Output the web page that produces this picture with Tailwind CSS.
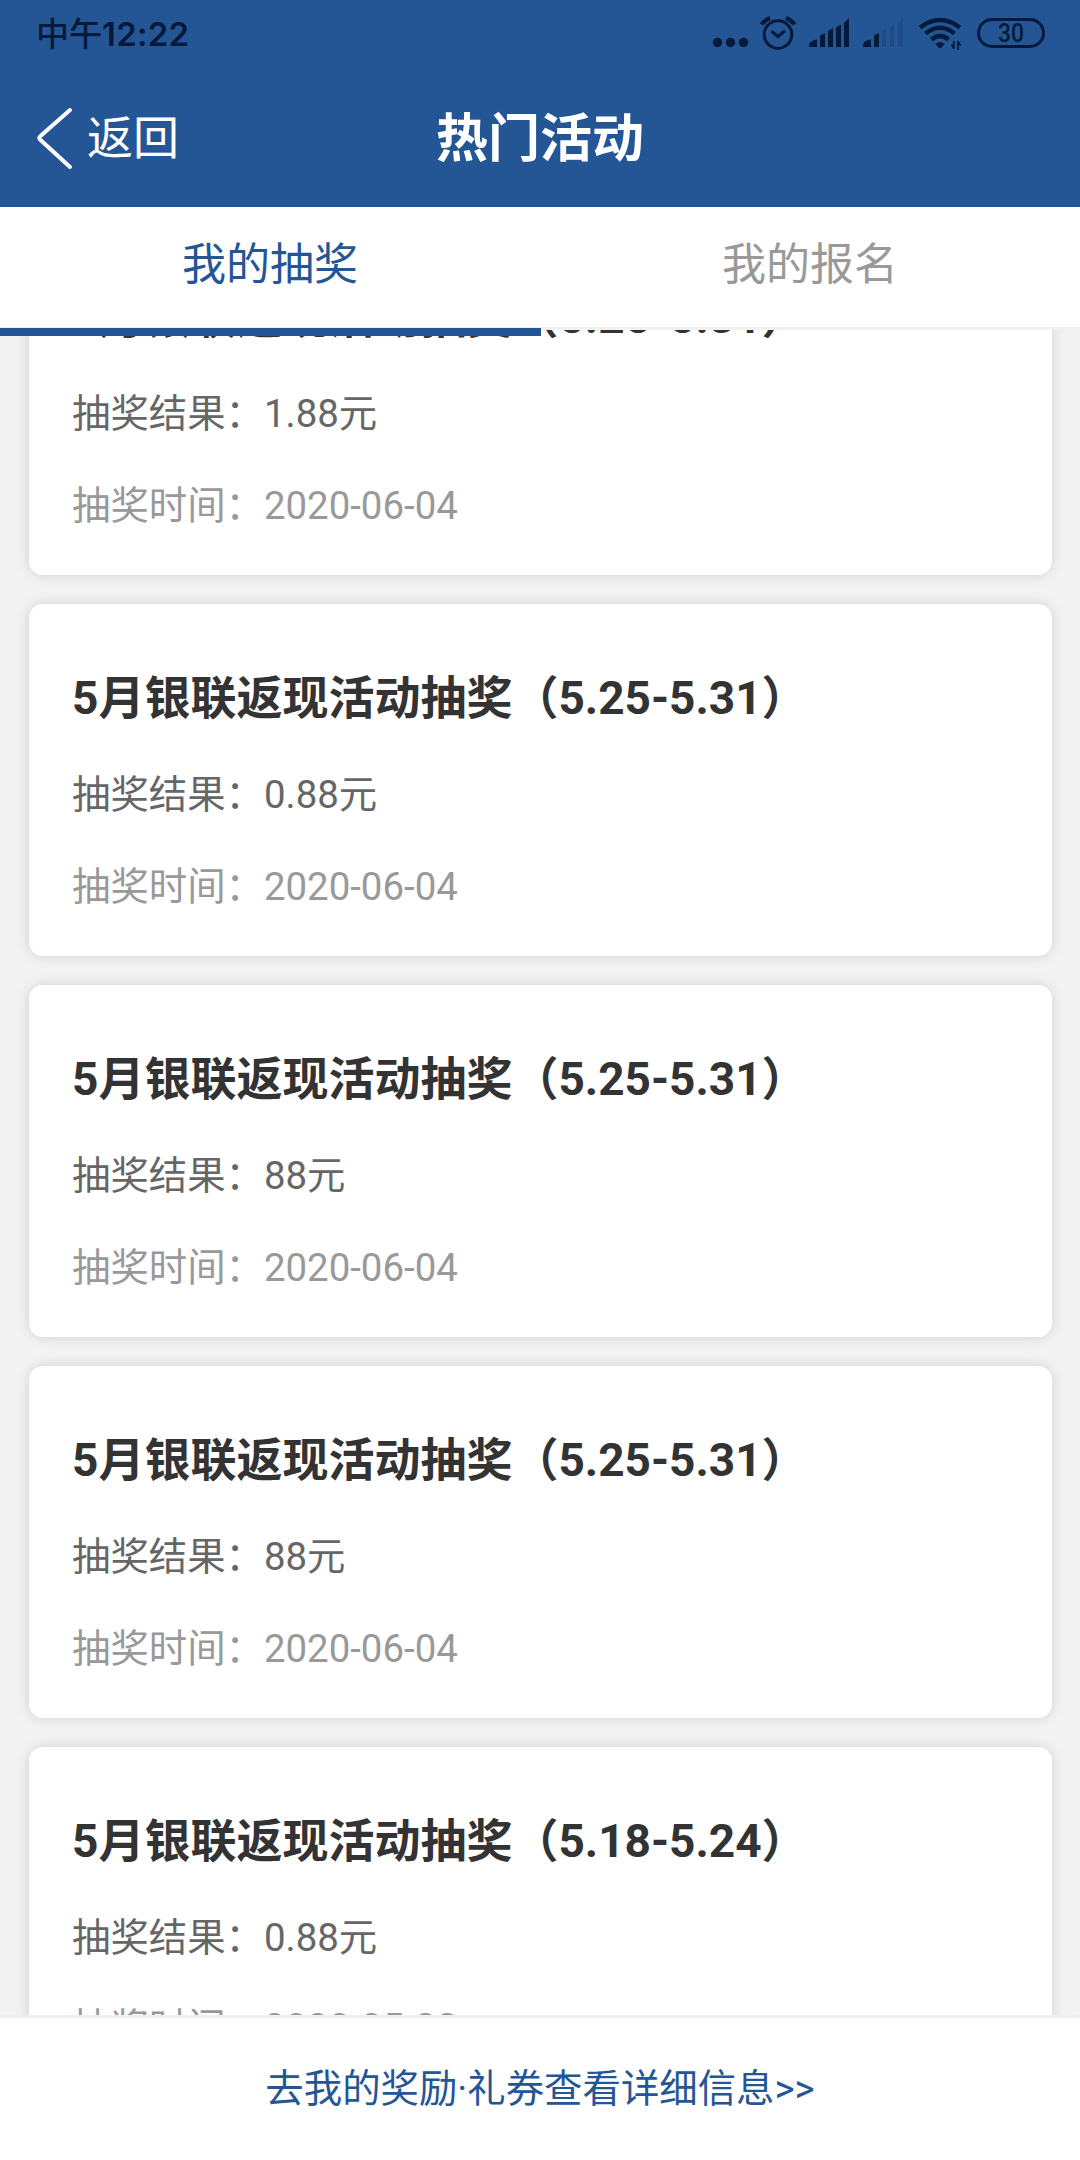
<!DOCTYPE html>
<html lang="zh-CN">
<head>
    <meta charset="UTF-8">
    <meta name="viewport" content="width=device-width, initial-scale=1.0">
    <title>热门活动</title>
    <script src="https://cdn.jsdelivr.net/npm/@tailwindcss/browser@4"></script>
</head>
<body class="bg-[#f3f3f3] w-[1080px] h-[2160px] overflow-hidden flex flex-col font-['Roboto','Noto_Sans_CJK_SC',sans-serif]">

    <!-- Header -->
    <header class="h-[207px] shrink-0 bg-[#245696] flex flex-col">
        <!-- Status bar -->
        <div class="h-[68px] pl-[36px] flex justify-between text-[#051a3a]">
            <span class="text-[33px] leading-[68px] font-medium font-['Inter','Noto_Sans_CJK_SC',sans-serif]">中午<span class="font-semibold tracking-[0.2px]">12:22</span></span>
            <svg class="w-[380px] h-[68px]" viewBox="0 0 380 68" fill="currentColor">
                <circle cx="17.5" cy="42.5" r="4.7"/>
                <circle cx="30.5" cy="42.5" r="4.7"/>
                <circle cx="43.5" cy="42.5" r="4.7"/>
                <!-- alarm -->
                <g fill="none" stroke="currentColor" stroke-width="3">
                    <circle cx="78" cy="34.5" r="13.8"/>
                    <path d="M72.500 32l5.500 4.500 6-5" stroke-linecap="round"/>
                    <path d="M61.500 24.500q3-4.500 8.500-6.500M94.500 24.500q-3-4.500-8.500-6.500" stroke-width="4"/>
                </g>
                <!-- signal 1 -->
                <path d="M109 47v-3q2-4 8-4.500v7.500zM120 47v-11.500l5-2.500v14zM128 47v-16l5-3v19zM136 47v-19.500l5-3v22.500zM144 47v-24q2-2 5-5v29z"/>
                <!-- signal 2 -->
                <path d="M163 47v-3q2-4 8-4.500v7.500zM174 47v-11.500l5-2.500v14z"/>
                <path d="M182 47v-16l4-3v19zM190 47v-19.500l4-3v22.500zM198 47v-24q2-2 5-5v29z" fill="#1f4a86"/>
                <!-- wifi -->
                <g fill="none" stroke="currentColor" stroke-width="4.400">
                    <path d="M220 27.500q20-15 40 0"/>
                    <path d="M225.500 33.500q14.500-11.500 29 0"/>
                    <path d="M231.500 39.500q8.500-7 17 0"/>
                </g>
                <path d="M235.500 44q4.500-4 9 0l-3 3.500q-1.500 1-3 0z"/>
                <path d="M253.800 41v8M258 41v9" stroke="currentColor" stroke-width="1.800"/>
                <path d="M250.500 44.500l3 5v-5zM261.500 45.500l-3-5v5z"/>
                <!-- battery -->
                <rect x="278.500" y="19.500" width="65" height="27" rx="13.500" fill="none" stroke="currentColor" stroke-width="3"/>
                <text x="298" y="42" textLength="26" lengthAdjust="spacingAndGlyphs" class="text-[25px] font-medium font-['Roboto']">30</text>
            </svg>
        </div>
        <!-- Title bar -->
        <div class="flex-1 grid grid-cols-3 items-center pt-px">
            <div class="flex items-center pl-[36px]">
                <svg class="w-[37px] h-[64px]" viewBox="0 0 37 64" fill="none" stroke="white" stroke-width="4" stroke-linecap="round" stroke-linejoin="round">
                    <path d="M34 4L4.500 30q-2.500 2 0 4L34 61"/>
                </svg>
                <span class="ml-[14px] text-[46px] leading-[60px] text-white">返回</span>
            </div>
            <h1 class="pt-1 text-[52px] leading-[70px] font-bold text-white text-center">热门活动</h1>
        </div>
    </header>

    <!-- Tabs -->
    <nav class="relative z-10 h-[123px] shrink-0 grid grid-cols-2 bg-white border-b-3 border-[#f1f1f1] text-[44px] leading-[116px] text-center">
        <a class="text-[#245696]">我的抽奖</a>
        <a class="text-[#999]">我的报名</a>
        <div class="absolute left-0 top-[121px] w-[541px] h-2 bg-[#245696]"></div>
    </nav>

    <!-- Draw records -->
    <main class="flex-1 min-h-0 overflow-hidden pl-[29px] pr-[28px]">
        <div class="-mt-[107px] flex flex-col gap-[29px]">
            <section class="h-[352px] shrink-0 bg-white rounded-[14px] shadow-[0_0_14px_rgba(0,0,0,0.15)] px-[43px] pt-[62px]">
                <h2 class="text-[46px] leading-[64px] font-bold text-[#333]">5月银联返现活动抽奖（5.25-5.31）</h2>
                <p class="mt-[35px] text-[38.4px] leading-[60px] text-[#666]">抽奖结果：1.88元</p>
                <p class="mt-8 text-[38.4px] leading-[60px] text-[#999]">抽奖时间：2020-06-04</p>
            </section>
            <section class="h-[352px] shrink-0 bg-white rounded-[14px] shadow-[0_0_14px_rgba(0,0,0,0.15)] px-[43px] pt-[62px]">
                <h2 class="text-[46px] leading-[64px] font-bold text-[#333]">5月银联返现活动抽奖（5.25-5.31）</h2>
                <p class="mt-[35px] text-[38.4px] leading-[60px] text-[#666]">抽奖结果：0.88元</p>
                <p class="mt-8 text-[38.4px] leading-[60px] text-[#999]">抽奖时间：2020-06-04</p>
            </section>
            <section class="h-[352px] shrink-0 bg-white rounded-[14px] shadow-[0_0_14px_rgba(0,0,0,0.15)] px-[43px] pt-[62px]">
                <h2 class="text-[46px] leading-[64px] font-bold text-[#333]">5月银联返现活动抽奖（5.25-5.31）</h2>
                <p class="mt-[35px] text-[38.4px] leading-[60px] text-[#666]">抽奖结果：88元</p>
                <p class="mt-8 text-[38.4px] leading-[60px] text-[#999]">抽奖时间：2020-06-04</p>
            </section>
            <section class="h-[352px] shrink-0 bg-white rounded-[14px] shadow-[0_0_14px_rgba(0,0,0,0.15)] px-[43px] pt-[62px]">
                <h2 class="text-[46px] leading-[64px] font-bold text-[#333]">5月银联返现活动抽奖（5.25-5.31）</h2>
                <p class="mt-[35px] text-[38.4px] leading-[60px] text-[#666]">抽奖结果：88元</p>
                <p class="mt-8 text-[38.4px] leading-[60px] text-[#999]">抽奖时间：2020-06-04</p>
            </section>
            <section class="h-[352px] shrink-0 bg-white rounded-[14px] shadow-[0_0_14px_rgba(0,0,0,0.15)] px-[43px] pt-[62px]">
                <h2 class="text-[46px] leading-[64px] font-bold text-[#333]">5月银联返现活动抽奖（5.18-5.24）</h2>
                <p class="mt-[35px] text-[38.4px] leading-[60px] text-[#666]">抽奖结果：0.88元</p>
                <p class="mt-[30px] text-[38.4px] leading-[60px] text-[#999]">抽奖时间：2020-05-28</p>
            </section>
        </div>
    </main>

    <!-- Footer link -->
    <footer class="h-[145px] shrink-0 bg-white border-t-3 border-[#f0f0f0] text-center">
        <a class="text-[38.4px] leading-[142px] text-[#245696]">去我的奖励·礼券查看详细信息&gt;&gt;</a>
    </footer>

</body>
</html>
